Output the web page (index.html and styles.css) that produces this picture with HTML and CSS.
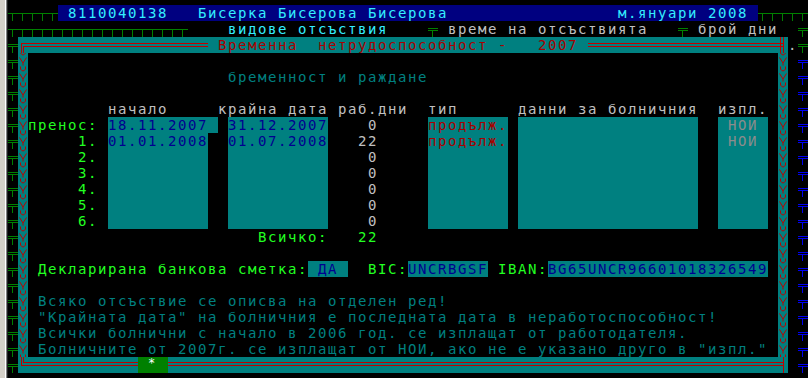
FILE: index.html
```html
<!DOCTYPE html>
<html lang="bg">
<head>
<meta charset="utf-8">
<title>Временна нетрудоспособност</title>
<link rel="stylesheet" href="styles.css">
</head>
<body>
<div class="window">
  <div class="winframe"></div>
  <div class="screen">
    <div class="row">
      <span class="tees c5"></span>
      <span class="t topbar"> 8110040138   Бисерка Бисерова Бисерова                 м.януари 2008 </span>
      <span class="tees c5"></span>
    </div>
    <div class="row">
      <span class="tees c18"></span>
      <span class="t cyan">    видове отсъствия    </span>
      <span class="dtee"></span>
      <span class="t grey"> време на отсъствията   </span>
      <span class="dtee"></span>
      <span class="t grey"> брой дни  </span>
      <span class="dtee"></span>
    </div>
    <div class="main">
      <div class="vtee"></div>
      <div class="dialog">
        <div class="dtop">
          <svg class="cell" width="10" height="16" viewBox="0 0 10 16" shape-rendering="crispEdges">
            <rect x="3" y="6" width="7" height="1" fill="#c00000"/>
            <rect x="3" y="6" width="1" height="10" fill="#c00000"/>
            <rect x="5" y="9" width="5" height="1" fill="#c00000"/>
            <rect x="5" y="9" width="1" height="7" fill="#c00000"/>
          </svg>
          <span class="hline c18"></span>
          <span class="t"> </span>
          <span class="t red">Временна  нетрудоспособност -   2007</span>
          <span class="t"> </span>
          <span class="hline c19"></span>
          <svg class="cell" width="10" height="16" viewBox="0 0 10 16" shape-rendering="crispEdges">
            <rect x="0" y="6" width="6" height="1" fill="#c00000"/>
            <rect x="0" y="9" width="6" height="1" fill="#c00000"/>
            <rect x="2" y="0" width="1" height="16" fill="#c00000"/>
            <rect x="5" y="0" width="1" height="16" fill="#c00000"/>
          </svg>
        </div>
        <div class="dmid">
          <svg class="vborder" width="10" height="304" viewBox="0 0 10 304">
            <defs>
              <pattern id="redglyph" width="10" height="16" patternUnits="userSpaceOnUse">
                <rect width="10" height="16" fill="#008080"/>
                <path d="M1.5 4.5 L5 10 L8.5 4.5 M5 10 V12.5 M2.5 13.5 V16 M7.5 13.5 V16 M2.5 0 Q5 4 7.5 0" fill="none" stroke="#c00000" stroke-width="1"/>
              </pattern>
            </defs>
            <rect width="10" height="304" fill="url(#redglyph)"/>
          </svg>
          <div class="content">
            <div class="crow"></div>
            <div class="crow"><span class="t teal">                    бременност и раждане</span></div>
            <div class="crow"></div>
            <div class="crow"><span class="t grey">        начало     крайна дата раб.дни  тип      данни за болничния  изпл. </span></div>
            <div class="crow">
              <span class="t green">пренос: </span>
              <span class="t box navy">18.11.2007 </span>
              <span class="t"> </span>
              <span class="t box navy">31.12.2007</span>
              <span class="t grey">    0     </span>
              <span class="t box red">продълж.</span>
              <span class="t"> </span>
              <span class="t box">                  </span>
              <span class="t">  </span>
              <span class="t box dim"> НОИ </span>
            </div>
            <div class="crow">
              <span class="t green">     1. </span>
              <span class="t box navy">01.01.2008</span>
              <span class="t">  </span>
              <span class="t box navy">01.07.2008</span>
              <span class="t grey">   22     </span>
              <span class="t box red">продълж.</span>
              <span class="t"> </span>
              <span class="t box">                  </span>
              <span class="t">  </span>
              <span class="t box dim"> НОИ </span>
            </div>
            <div class="crow">
              <span class="t green">     2. </span>
              <span class="t box">          </span>
              <span class="t">  </span>
              <span class="t box">          </span>
              <span class="t grey">    0     </span>
              <span class="t box">        </span>
              <span class="t"> </span>
              <span class="t box">                  </span>
              <span class="t">  </span>
              <span class="t box">     </span>
            </div>
            <div class="crow">
              <span class="t green">     3. </span>
              <span class="t box">          </span>
              <span class="t">  </span>
              <span class="t box">          </span>
              <span class="t grey">    0     </span>
              <span class="t box">        </span>
              <span class="t"> </span>
              <span class="t box">                  </span>
              <span class="t">  </span>
              <span class="t box">     </span>
            </div>
            <div class="crow">
              <span class="t green">     4. </span>
              <span class="t box">          </span>
              <span class="t">  </span>
              <span class="t box">          </span>
              <span class="t grey">    0     </span>
              <span class="t box">        </span>
              <span class="t"> </span>
              <span class="t box">                  </span>
              <span class="t">  </span>
              <span class="t box">     </span>
            </div>
            <div class="crow">
              <span class="t green">     5. </span>
              <span class="t box">          </span>
              <span class="t">  </span>
              <span class="t box">          </span>
              <span class="t grey">    0     </span>
              <span class="t box">        </span>
              <span class="t"> </span>
              <span class="t box">                  </span>
              <span class="t">  </span>
              <span class="t box">     </span>
            </div>
            <div class="crow">
              <span class="t green">     6. </span>
              <span class="t box">          </span>
              <span class="t">  </span>
              <span class="t box">          </span>
              <span class="t grey">    0     </span>
              <span class="t box">        </span>
              <span class="t"> </span>
              <span class="t box">                  </span>
              <span class="t">  </span>
              <span class="t box">     </span>
            </div>
            <div class="crow"><span class="t green">                       Всичко:   22</span></div>
            <div class="crow"></div>
            <div class="crow">
              <span class="t green"> Декларирана банкова сметка:</span>
              <span class="t box navy"> ДА </span>
              <span class="t green">  BIC:</span>
              <span class="t box navy">UNCRBGSF</span>
              <span class="t green"> IBAN:</span>
              <span class="t box navy">BG65UNCR96601018326549</span>
            </div>
            <div class="crow"></div>
            <div class="crow"><span class="t teal"> Всяко отсъствие се описва на отделен ред!</span></div>
            <div class="crow"><span class="t teal"> "Крайната дата" на болничния е последната дата в неработоспособност!</span></div>
            <div class="crow"><span class="t teal"> Всички болнични с начало в 2006 год. се изплащат от работодателя.</span></div>
            <div class="crow"><span class="t teal"> Болничните от 2007г. се изплащат от НОИ, ако не е указано друго в "изпл."</span></div>
          </div>
          <svg class="vborder" width="10" height="304" viewBox="0 0 10 304">
            <rect width="10" height="304" fill="url(#redglyph)"/>
          </svg>
        </div>
        <div class="dbot">
          <svg class="cell" width="10" height="16" viewBox="0 0 10 16" shape-rendering="crispEdges">
            <rect x="3" y="0" width="1" height="9" fill="#c00000"/>
            <rect x="3" y="8" width="7" height="1" fill="#c00000"/>
            <rect x="5" y="0" width="1" height="6" fill="#c00000"/>
            <rect x="5" y="5" width="5" height="1" fill="#c00000"/>
          </svg>
          <span class="hline bot c11"></span>
          <span class="t star"> * </span>
          <span class="hline bot c61"></span>
          <svg class="cell" width="10" height="16" viewBox="0 0 10 16" shape-rendering="crispEdges">
            <rect x="0" y="5" width="5" height="1" fill="#c00000"/>
            <rect x="0" y="8" width="5" height="1" fill="#c00000"/>
            <rect x="5" y="0" width="1" height="16" fill="#c00000"/>
          </svg>
        </div>
      </div>
      <div class="shade"><span class="t grey">.</span></div>
      <div class="edge">
        <span class="dtee"></span>
        <div class="vtee blue"></div>
      </div>
    </div>
  </div>
</div>
</body>
</html>
```

FILE: styles.css
```css
html, body {
  margin: 0;
  padding: 0;
  background: #000;
}

body {
  width: 808px;
  height: 378px;
  overflow: hidden;
  --gl: #008000;
  --rl: #c00000;
  --teal: #008080;
}

.window {
  display: flex;
  width: 808px;
  height: 378px;
  overflow: hidden;
}

.winframe {
  width: 8px;
  flex: none;
  background: linear-gradient(to right, #d4d0c8 0 5px, #ffffff 5px 6px, #808080 6px 7px, #202020 7px 8px);
}

.screen {
  width: 800px;
  flex: none;
  padding-top: 5px;
  display: flex;
  flex-direction: column;
}

.row,
.crow {
  display: flex;
  height: 16px;
  flex: none;
}

.t {
  display: block;
  flex: none;
  height: 16px;
  white-space: pre;
  font-family: "DejaVu Sans Mono", monospace;
  font-size: 14px;
  line-height: 16px;
  letter-spacing: 1.571px;
  color: #c0c0c0;
  overflow: hidden;
}

.topbar { background: #000080; color: #33eeff; }
.cyan { color: #33eeff; }
.grey { color: #c0c0c0; }
.green { color: #22ff22; }
.teal { color: #008080; }
.red { color: #a80000; }
.navy { color: #000090; }
.dim { color: #8c8c8c; }
.box { background: var(--teal); }

.star {
  background: #008000;
  color: #ffffff;
  font-size: 12px;
  letter-spacing: 2.775px;
  line-height: 12px;
}

.c5 { width: 50px; }
.c11 { width: 110px; }
.c18 { width: 180px; }
.c19 { width: 190px; }
.c61 { width: 610px; }

.tees {
  height: 16px;
  flex: none;
  background:
    linear-gradient(var(--gl), var(--gl)) 0 8px / 100% 1px no-repeat,
    repeating-linear-gradient(to right, transparent 0 4px, var(--gl) 4px 5px, transparent 5px 10px) 0 9px / 100% 7px no-repeat;
}

.dtee {
  --c: var(--gl);
  display: block;
  width: 10px;
  height: 16px;
  flex: none;
  background:
    linear-gradient(var(--c), var(--c)) 0 7px / 10px 1px no-repeat,
    linear-gradient(var(--c), var(--c)) 0 9px / 10px 1px no-repeat,
    linear-gradient(var(--c), var(--c)) 4px 10px / 1px 6px no-repeat;
}

.vtee {
  --c: var(--gl);
  width: 10px;
  flex: none;
  background:
    linear-gradient(to bottom, transparent 7px, var(--c) 7px 8px, transparent 8px 9px, var(--c) 9px 10px, transparent 10px) 0 0 / 10px 16px repeat-y,
    linear-gradient(to bottom, transparent 10px, var(--c) 10px) 4px 0 / 1px 16px repeat-y;
}

.vtee.blue {
  --c: #0000f0;
  flex: 1;
}

.main {
  display: flex;
  flex: 1;
}

.dialog {
  width: 770px;
  flex: none;
  display: flex;
  flex-direction: column;
  align-self: flex-start;
}

.dtop,
.dbot {
  display: flex;
  height: 16px;
  background: var(--teal);
}

.cell {
  display: block;
  flex: none;
}

.hline {
  display: block;
  height: 16px;
  flex: none;
  background: linear-gradient(to bottom, transparent 6px, var(--rl) 6px 7px, transparent 7px 9px, var(--rl) 9px 10px, transparent 10px);
}

.hline.bot {
  background: linear-gradient(to bottom, transparent 5px, var(--rl) 5px 6px, transparent 6px 8px, var(--rl) 8px 9px, transparent 9px);
}

.dmid {
  display: flex;
  height: 304px;
}

.vborder {
  display: block;
  flex: none;
}

.content {
  width: 750px;
  flex: none;
  display: flex;
  flex-direction: column;
  background: #000;
}

.shade {
  width: 10px;
  flex: none;
}

.edge {
  width: 10px;
  flex: none;
  display: flex;
  flex-direction: column;
}
```
